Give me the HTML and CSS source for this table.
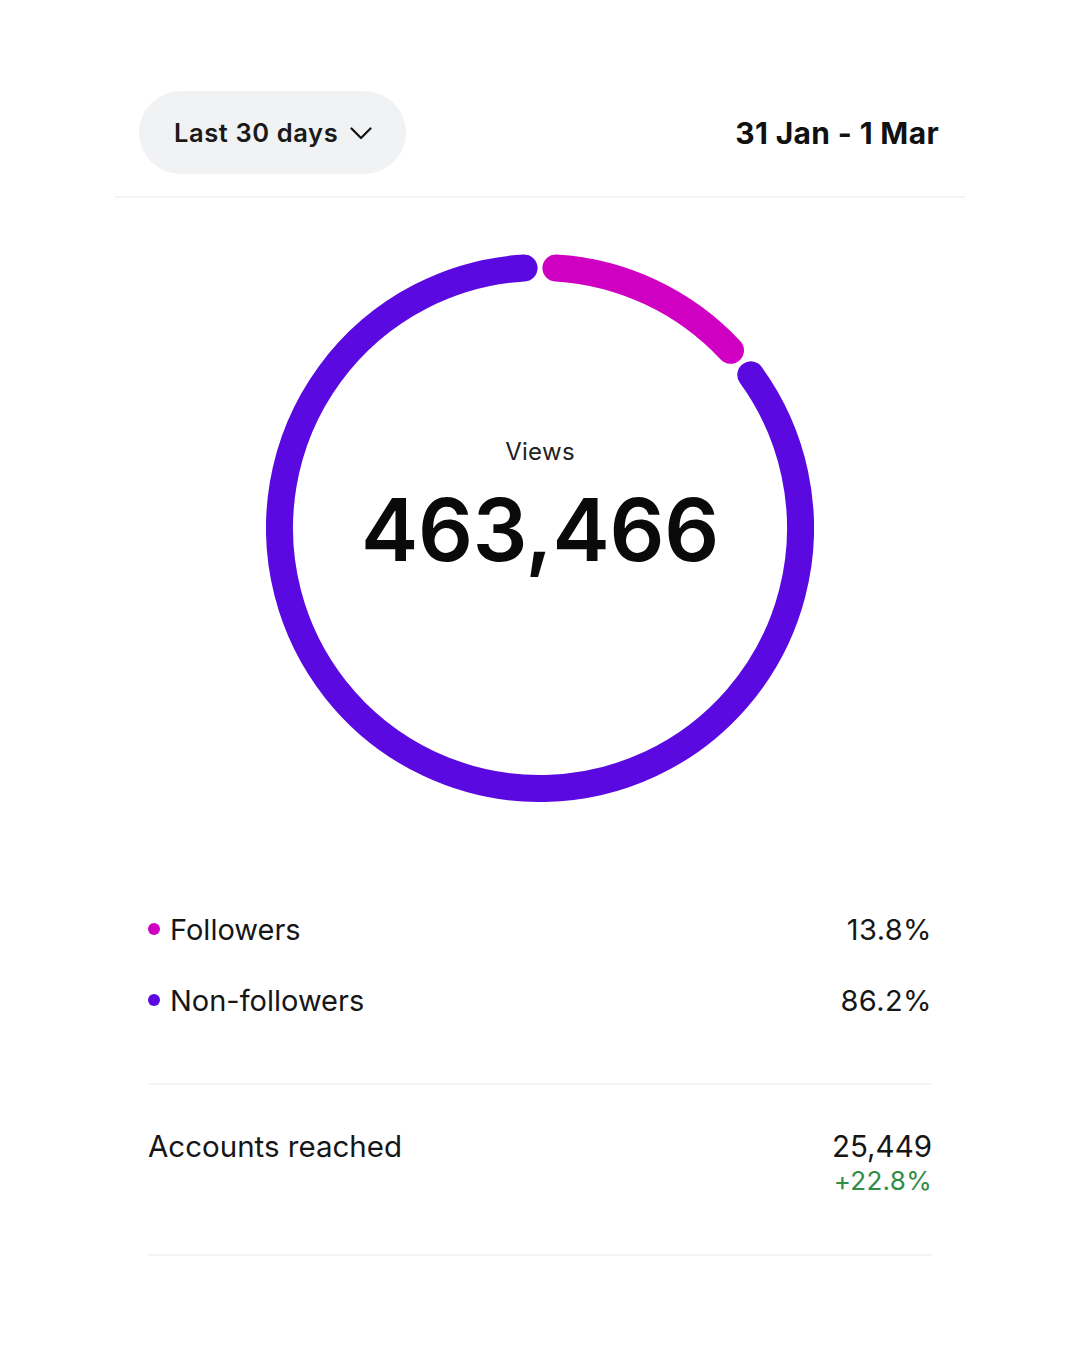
FILE: index.html
```html
<!DOCTYPE html>
<html lang="en">
<head>
<meta charset="utf-8">
<title>Views</title>
<link rel="stylesheet" href="styles.css">
</head>
<body>
<main class="page">
  <header class="header">
    <button class="range">
      <span>Last 30 days</span>
      <svg class="chev" width="22" height="13" viewBox="0 0 22 13"><path d="M1.5 1.5 L11 11 L20.5 1.5" fill="none" stroke="#111" stroke-width="2.2" stroke-linecap="round" stroke-linejoin="round"/></svg>
    </button>
    <div class="dates">31 Jan - 1 Mar</div>
  </header>
  <div class="rule rule-top"></div>

  <section class="chart">
    <svg class="donut" width="548" height="548" viewBox="0 0 548 548">
      <path d="M484.75 120.88 A260.5 260.5 0 1 1 258.10 13.99" fill="none" stroke="#5a0ae0" stroke-width="27" stroke-linecap="round"/>
      <path d="M289.90 13.99 A260.5 260.5 0 0 1 464.52 96.34" fill="none" stroke="#d000c2" stroke-width="27" stroke-linecap="round"/>
    </svg>
    <div class="center">
      <div class="label">Views</div>
      <div class="total">463,466</div>
    </div>
  </section>

  <section class="legend">
    <div class="row">
      <div class="name"><span class="dot dot-f"></span>Followers</div>
      <div class="pct">13.8%</div>
    </div>
    <div class="row">
      <div class="name"><span class="dot dot-n"></span>Non-followers</div>
      <div class="pct">86.2%</div>
    </div>
  </section>

  <div class="rule rule-inner"></div>

  <section class="reach">
    <div class="reach-label">Accounts reached</div>
    <div class="reach-vals">
      <div class="reach-num">25,449</div>
      <div class="reach-delta">+22.8%</div>
    </div>
  </section>

  <div class="rule rule-inner rule-last"></div>
</main>
</body>
</html>
```

FILE: styles.css
```css
* { box-sizing: border-box; }
html, body { margin: 0; padding: 0; background: #fff; }
body {
  font-family: Inter, "Noto Sans", "Liberation Sans", sans-serif;
  color: #111;
  width: 1080px;
  height: 1350px;
  overflow: hidden;
}
.page { display: flex; flex-direction: column; }

.header {
  margin-top: 91px;
  padding: 0 141px 0 139px;
  display: flex;
  justify-content: space-between;
  align-items: center;
  height: 83px;
}
.range {
  height: 83px;
  width: 267px;
  border: none;
  border-radius: 42px;
  background: #f1f2f4;
  display: flex;
  align-items: center;
  gap: 12px;
  padding: 0 0 0 35px;
  font-family: inherit;
  font-size: 25.5px;
  font-weight: 600;
  color: #1a1a1a;
  letter-spacing: 0.6px;
}
.chev { margin-top: 1px; }
.dates {
  font-size: 30px;
  font-weight: 700;
  color: #111;
  letter-spacing: 0.35px;
}

.rule { height: 2px; background: #f3f3f3; }
.rule-top { margin: 22px 115px 0; }

.chart {
  margin-top: 56px;
  display: grid;
  justify-items: center;
}
.donut, .center { grid-area: 1 / 1; }
.center {
  display: flex;
  flex-direction: column;
  align-items: center;
  padding-top: 183px;
}
.label {
  font-size: 24px;
  line-height: 30px;
  color: #222;
  letter-spacing: 0.3px;
}
.total {
  margin-top: 18px;
  font-size: 86px;
  line-height: 90px;
  font-weight: 600;
  color: #0a0a0a;
  letter-spacing: -0.3px;
}

.legend {
  margin-top: 110px;
  padding: 0 148px 0 148px;
  display: flex;
  flex-direction: column;
  gap: 37px;
}
.row {
  display: flex;
  justify-content: space-between;
  align-items: center;
  height: 34px;
  font-size: 29px;
  color: #161616;
}
.name { display: flex; align-items: center; }
.pct { letter-spacing: 0.4px; }
.dot {
  width: 12px;
  height: 12px;
  border-radius: 50%;
  margin: 0 10px 0 0;
}
.dot-f { background: #d000c2; }
.dot-n { background: #5a0ae0; }

.rule-inner { margin: 0 148px; }
.legend + .rule-inner { margin-top: 66px; }

.reach {
  margin-top: 42px;
  padding: 0 148px 0 148px;
  display: flex;
  justify-content: space-between;
  align-items: flex-start;
}
.reach-label { font-size: 29.5px; line-height: 38px; color: #161616; }
.reach-vals { display: flex; flex-direction: column; align-items: flex-end; }
.reach-num { font-size: 29.5px; line-height: 38px; color: #161616; }
.reach-delta { font-size: 26px; line-height: 32px; color: #2f8c45; margin-top: 0; letter-spacing: 0.3px; }
.rule-last { margin-top: 57px; }
```
